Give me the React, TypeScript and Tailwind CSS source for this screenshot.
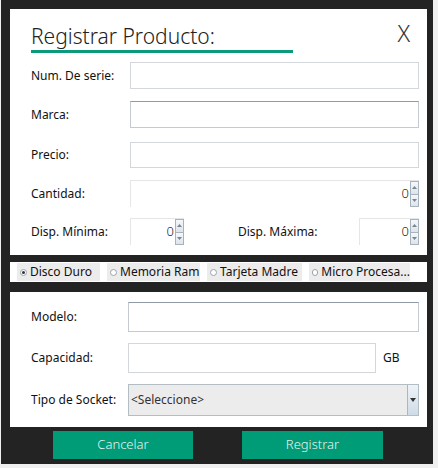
import React from "react";

const font = { fontFamily: '"Noto Sans", "Open Sans", Arial, sans-serif' };

function Spin() {
    return (
        <div className="flex h-full w-[9px] flex-col">
            <div className="flex flex-1 items-center justify-center border border-[#a7b2bd] bg-gradient-to-b from-[#f6f8fa] to-[#dde4ea]">
                <svg width="5" height="3" viewBox="0 0 5 3">
                    <path d="M2.5 0 L5 3 L0 3 Z" fill="#7a8591" />
                </svg>
            </div>
            <div className="flex flex-1 items-center justify-center border border-t-0 border-[#a7b2bd] bg-gradient-to-b from-[#f6f8fa] to-[#dde4ea]">
                <svg width="5" height="3" viewBox="0 0 5 3">
                    <path d="M0 0 L5 0 L2.5 3 Z" fill="#7a8591" />
                </svg>
            </div>
        </div>
    );
}

function NumberBox({ className }: { className: string }) {
    return (
        <div
            className={`flex h-[27px] items-center border-l border-t border-[#e6e6e6] bg-white ${className}`}
        >
            <span className="flex-1 pr-[1px] text-right text-[13px] font-light text-[#222]">0</span>
            <Spin />
        </div>
    );
}

function Radio({ label, checked, w }: { label: string; checked?: boolean; w: string }) {
    return (
        <div className={`flex h-[18px] items-center gap-[3px] bg-[#ececec] pl-[3px] ${w}`}>
            <span className="flex h-[7px] w-[7px] items-center justify-center rounded-full border border-[#9aa4ae] bg-white">
                {checked && <span className="h-[3px] w-[3px] rounded-full bg-[#333]" />}
            </span>
            <span className="whitespace-nowrap text-[12px] text-[#111]">{label}</span>
        </div>
    );
}

export default function App() {
    return (
        <div className="h-[468px] w-[438px] bg-[#f0f0f0] pl-[1px]" style={font}>
            <div className="flex h-[464px] w-[432px] flex-col bg-[#232323] pl-[9px] pr-[6px] pt-[9px]">
                {/* main form */}
                <div className="relative h-[246px] bg-white pl-[21px] pr-[8px]">
                    <div className="pt-[14px] text-[21px] font-light leading-[26px] text-[#222]">
                        Registrar Producto:
                    </div>
                    <div className="mt-[1px] h-[3px] w-[262px] bg-[#0c9a7a]" />
                    <span className="absolute right-[17px] top-[7px] text-[23px] font-light text-[#333]">
                        X
                    </span>

                    <div className="mt-[9px] flex flex-col text-[12px] text-[#111]">
                        <div className="flex h-[27px] items-center">
                            <span className="w-[99px]">Num. De serie:</span>
                            <div className="h-[27px] flex-1 border border-[#d3d7dc]" />
                        </div>
                        <div className="mt-[12px] flex h-[27px] items-center">
                            <span className="w-[99px]">Marca:</span>
                            <div className="h-[27px] flex-1 border border-[#c3cad1] border-t-[#8f9ba6]" />
                        </div>
                        <div className="mt-[13px] flex h-[27px] items-center">
                            <span className="w-[99px]">Precio:</span>
                            <div className="h-[26px] flex-1 border border-[#d3d7dc]" />
                        </div>
                        <div className="mt-[12px] flex h-[27px] items-center">
                            <span className="w-[99px]">Cantidad:</span>
                            <NumberBox className="flex-1" />
                        </div>
                        <div className="mt-[11px] flex h-[27px] items-center">
                            <span className="w-[99px]">Disp. Mínima:</span>
                            <NumberBox className="w-[54px]" />
                            <span className="ml-[54px] w-[121px]">Disp. Máxima:</span>
                            <NumberBox className="flex-1" />
                        </div>
                    </div>
                </div>

                {/* product type */}
                <div className="mt-[7px] flex h-[20px] items-center gap-[7px] bg-white pl-[7px]">
                    <Radio label="Disco Duro" checked w="w-[83px]" />
                    <Radio label="Memoria Ram" w="w-[93px]" />
                    <Radio label="Tarjeta Madre" w="w-[95px]" />
                    <Radio label="Micro Procesa..." w="w-[101px]" />
                </div>

                {/* detail */}
                <div className="mt-[10px] flex h-[135px] flex-col gap-[11px] bg-white pl-[21px] pr-[8px] pt-[10px] text-[12px] text-[#111]">
                    <div className="flex h-[30px] items-center">
                        <span className="w-[97px]">Modelo:</span>
                        <div className="h-[30px] flex-1 border border-[#c3cad1] border-t-[#8f9ba6]" />
                    </div>
                    <div className="flex h-[30px] items-center">
                        <span className="w-[97px]">Capacidad:</span>
                        <div className="h-[30px] w-[248px] border border-[#d3d7dc]" />
                        <span className="ml-[7px]">GB</span>
                    </div>
                    <div className="flex h-[32px] items-center">
                        <span className="w-[97px]">Tipo de Socket:</span>
                        <div className="flex h-[32px] flex-1 items-center border border-[#b4bcc4] bg-[#ececec]">
                            <span className="flex-1 pl-[2px] text-[12px] text-[#333]">&lt;Seleccione&gt;</span>
                            <div className="flex h-full w-[11px] items-center justify-center border-l border-[#a9b6c3] bg-gradient-to-b from-[#eef3f8] to-[#cfdbe7]">
                                <svg width="6" height="4" viewBox="0 0 6 4">
                                    <path d="M0 0 L6 0 L3 4 Z" fill="#333" />
                                </svg>
                            </div>
                        </div>
                    </div>
                </div>

                {/* buttons */}
                <div className="mt-[4px] flex h-[28px] gap-[49px] pl-[43px] text-[13px] font-light text-[#e8f2ee]">
                    <button className="h-[28px] w-[140px] bg-[#009b77]">Cancelar</button>
                    <button className="h-[28px] w-[141px] bg-[#009b77]">Registrar</button>
                </div>
            </div>
        </div>
    );
}
